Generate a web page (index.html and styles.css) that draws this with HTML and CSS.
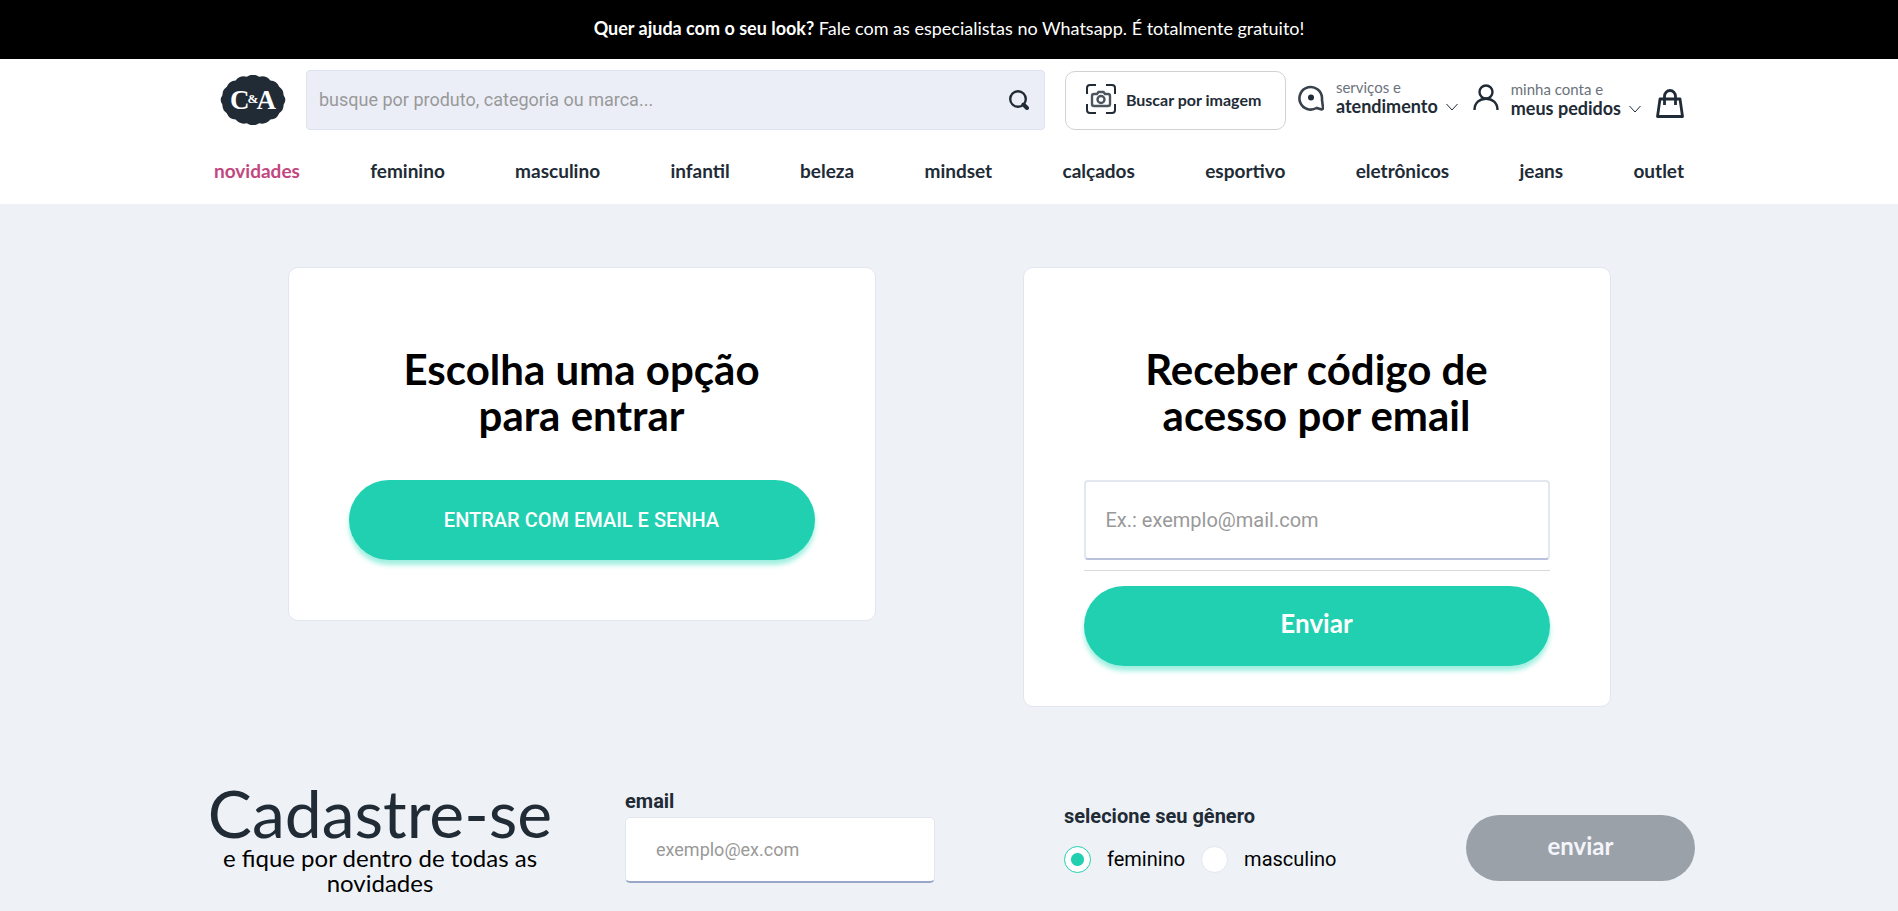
FILE: index.html
```html
<!DOCTYPE html>
<html lang="pt-BR">

<head>
    <meta charset="UTF-8">
    <meta name="viewport" content="width=device-width, initial-scale=1.0">
    <title>C&amp;A - Entrar</title>

    <link rel="stylesheet" href="styles.css">
</head>

<body>
    <div class="topbar">
        <p><strong>Quer ajuda com o seu look?</strong> Fale com as especialistas no Whatsapp. É totalmente gratuito!</p>
    </div>

    <header class="header">
        <div class="header-main">
            <a href="#" class="logo" aria-label="C&amp;A">
                <svg width="66" height="50" viewBox="0 0 66 50">
                    <path fill="#212b36" d="M63.6 29.7A10 10 0 0 1 59.2 38.2A10 10 0 0 1 50.4 44.6A11 11 0 0 1 39.2 48.2A11 11 0 0 1 26.8 48.2A11 11 0 0 1 15.6 44.6A10 10 0 0 1 6.8 38.2A10 10 0 0 1 2.4 29.7A8 8 0 0 1 2.4 20.3A10 10 0 0 1 6.8 11.8A10 10 0 0 1 15.6 5.4A11 11 0 0 1 26.8 1.8A11 11 0 0 1 39.2 1.8A11 11 0 0 1 50.4 5.4A10 10 0 0 1 59.2 11.8A10 10 0 0 1 63.6 20.3A8 8 0 0 1 63.6 29.7Z"/>
                    <text class="logo-text" x="33" y="34" text-anchor="middle">C<tspan class="logo-amp" dx="-2" dy="-6">&amp;</tspan><tspan dx="-2" dy="6">A</tspan></text>
                </svg>
            </a>

            <form class="search">
                <input type="text" class="search-input" placeholder="busque por produto, categoria ou marca..." aria-label="busque por produto, categoria ou marca">
                <button type="submit" class="search-btn" aria-label="buscar">
                    <svg width="20" height="20" viewBox="0 0 20 20" fill="none" stroke="#212b36">
                        <circle cx="9" cy="9" r="7.8" stroke-width="2.4"/>
                        <path d="M14.5 14.5L18 18" stroke-width="4" stroke-linecap="round"/>
                    </svg>
                </button>
            </form>

            <button type="button" class="image-search">
                <svg width="30" height="30" viewBox="0 0 30 30" fill="none" stroke="#212b36" stroke-width="2">
                    <path d="M1 10V4a3 3 0 0 1 3-3h6M20 1h6a3 3 0 0 1 3 3v6M29 20v6a3 3 0 0 1-3 3h-6M10 29H4a3 3 0 0 1-3-3v-6"/>
                    <g stroke="#4d555e" stroke-width="2.4">
                        <path d="M8 10h3l1.5-2h5l1.5 2h3a2 2 0 0 1 2 2v8a2 2 0 0 1-2 2H8a2 2 0 0 1-2-2v-8a2 2 0 0 1 2-2z"/>
                        <circle cx="15" cy="15.5" r="3.5"/>
                    </g>
                </svg>
                Buscar por imagem
            </button>

            <a href="#" class="account">
                <svg width="26" height="27" viewBox="0 0 26 27" fill="none" stroke="#39424c" stroke-width="2.6">
                    <path d="M24 13.5V16L25 23.5a1.5 1.5 0 0 1-2 1.8l-4.5-1.3a11.3 11.3 0 1 1 5.5-10.500z"/>
                    <circle cx="13" cy="13.5" r="3" fill="#212b36" stroke="none"/>
                </svg>
                <span class="account-text">
                    <small>serviços e</small>
                    <b>atendimento</b>
                </span>
                <svg class="arrow" width="12" height="8" viewBox="0 0 12 8" fill="none" stroke="#212b36"><path d="M.5 1L6 7l5.500-6"/></svg>
            </a>

            <a href="#" class="account account-low">
                <svg class="user-icon" width="26" height="27" viewBox="0 0 26 27" fill="none" stroke="#212b36" stroke-width="2.4">
                    <circle cx="13" cy="8" r="6.5"/>
                    <path d="M1.5 26c0-7 5-11.3 11.5-11.3S24.5 19 24.5 26"/>
                </svg>
                <span class="account-text">
                    <small>minha conta e</small>
                    <b>meus pedidos</b>
                </span>
                <svg class="arrow" width="12" height="8" viewBox="0 0 12 8" fill="none" stroke="#212b36"><path d="M.5 1L6 7l5.500-6"/></svg>
            </a>

            <a href="#" class="bag" aria-label="sacola">
                <svg width="28" height="29" viewBox="0 0 28 29" fill="none" stroke="#212b36" stroke-width="2.8" stroke-linejoin="round">
                    <path d="M4 10h20l2.5 17.5h-25z"/>
                    <path d="M8.5 16V7.5a5.5 6 0 0 1 11 0V16"/>
                </svg>
            </a>
        </div>

        <nav class="menu">
            <a href="#" class="active">novidades</a>
            <a href="#">feminino</a>
            <a href="#">masculino</a>
            <a href="#">infantil</a>
            <a href="#">beleza</a>
            <a href="#">mindset</a>
            <a href="#">calçados</a>
            <a href="#">esportivo</a>
            <a href="#">eletrônicos</a>
            <a href="#">jeans</a>
            <a href="#">outlet</a>
        </nav>
    </header>

    <main class="login">
        <section class="card">
            <h2>Escolha uma opção<br>para entrar</h2>
            <button type="button" class="btn btn-senha">Entrar com email e senha</button>
        </section>

        <form class="card card-code">
            <h2>Receber código de<br>acesso por email</h2>
            <input type="email" class="code-email" placeholder="Ex.: exemplo@mail.com" aria-label="email">
            <hr>
            <button type="submit" class="btn">Enviar</button>
        </form>
    </main>

    <form class="newsletter">
        <div class="newsletter-title">
            <h3>Cadastre-se</h3>
            <p>e fique por dentro de todas as novidades</p>
        </div>

        <div class="newsletter-email">
            <label for="newsEmail">email</label>
            <input type="email" id="newsEmail" placeholder="exemplo@ex.com">
        </div>

        <fieldset class="gender">
            <legend>selecione seu gênero</legend>
            <div class="gender-options">
                <input type="radio" name="gender" id="feminino" checked>
                <label for="feminino">feminino</label>
                <input type="radio" name="gender" id="masculino">
                <label for="masculino">masculino</label>
            </div>
        </fieldset>

        <button type="submit" class="newsletter-btn">enviar</button>
    </form>
</body>

</html>
```
FILE: styles.css
```css
* {
    box-sizing: border-box;
}

body {
    margin: 0;
    min-height: 100vh;
    background-color: #eef2f7;
    color: #212b36;
    font-family: Lato, "Open Sans", sans-serif;
}

a {
    color: inherit;
    text-decoration: none;
}

button,
input {
    font-family: inherit;
}

button {
    cursor: pointer;
}

h2,
h3,
p {
    margin: 0;
}

svg {
    display: block;
    flex-shrink: 0;
}

/* topo */
.topbar {
    padding: 15px 16px 17px;
    background-color: #000;
    color: #fff;
    font-size: 18px;
    line-height: 27px;
    text-align: center;
}

.header {
    padding: 11px 16px 22px;
    background-color: #fff;
}

.header-main,
.menu,
.login {
    max-width: 1470px;
    margin: 0 auto;
}

.header-main {
    display: flex;
    align-items: center;
}

.logo {
    margin: 0 20px 0 6px;
}

.logo-text {
    fill: #fff;
    font: bold 27px "Liberation Serif", serif;
}

.logo-amp {
    font-size: 13px;
}

.search {
    display: flex;
    flex: 1;
    height: 60px;
    margin-right: 20px;
    border: 1px solid #dfe2ef;
    border-radius: 4px;
    background-color: #ebeef7;
}

.search-input {
    flex: 1;
    padding: 0 12px 2px;
    border: 0;
    outline: 0;
    background: none;
    font-family: Roboto, sans-serif;
    font-size: 18px;
}

::placeholder {
    color: #999;
    opacity: 1;
}

.search-btn {
    padding: 0 15px;
    border: 0;
    background: none;
}

.image-search {
    display: flex;
    align-items: center;
    gap: 10px;
    width: 221px;
    height: 59px;
    margin-right: 12px;
    padding: 0 20px 2px;
    border: 1px solid #d0d2d4;
    border-radius: 10px;
    background-color: #fff;
    color: #212b36;
    font-size: 16px;
    font-weight: bold;
    white-space: nowrap;
}

.account {
    display: flex;
    align-items: center;
    margin-right: 15px;
    padding-bottom: 6px;
}

.account-low {
    padding-bottom: 2px;
}

.account-text {
    margin: 0 8px 0 12px;
    line-height: 19px;
}

.account-text small,
.account-text b {
    display: block;
}

.account-text small {
    color: #6b727b;
    font-size: 15px;
}

.account-text b {
    font-size: 18px;
}

.user-icon {
    margin-bottom: 4px;
}

.arrow {
    margin-top: 20px;
}

.bag {
    padding-top: 6px;
}

.menu {
    display: flex;
    justify-content: space-between;
    margin-top: 29px;
    font-size: 19px;
    font-weight: bold;
    line-height: 23px;
}

.menu .active {
    color: #c2477f;
}

/* login */
.login {
    display: flex;
    align-items: flex-start;
    justify-content: space-around;
    padding-top: 63px;
}

.card {
    width: 40%;
    padding: 78px 60px 60px;
    border: 1px solid #e0e5f0;
    border-radius: 10px;
    background-color: #fff;
}

.card-code {
    padding-bottom: 40px;
}

.card h2 {
    margin-bottom: 42px;
    color: #000;
    font-size: 42px;
    font-weight: bold;
    line-height: 46px;
    text-align: center;
}

.btn {
    display: block;
    width: 100%;
    height: 80px;
    padding-bottom: 8px;
    border: 0;
    border-radius: 40px;
    background-color: #20d0b0;
    box-shadow: 0 5px 5px #a0f0e0;
    color: #fff;
    font-size: 26px;
    font-weight: bold;
}

.btn-senha {
    padding-bottom: 2px;
    font-family: Roboto, sans-serif;
    font-size: 20px;
    font-weight: 500;
    text-transform: uppercase;
}

.code-email {
    display: block;
    width: 100%;
    height: 80px;
    padding: 0 20px;
    border: 2px solid #e2e7f0;
    border-bottom-color: #b8c2dc;
    border-radius: 4px;
    font-family: Roboto, sans-serif;
    font-size: 20px;
}

.card hr {
    margin: 10px 0 15px;
    border: 0;
    border-top: 1px solid #d9d9d9;
}

/* newsletter */
.newsletter {
    display: grid;
    grid-template-columns: 422fr 439fr 402fr 229fr;
    align-items: center;
    max-width: 1492px;
    margin: 0 auto;
    padding-top: 74px;
}

.newsletter-title {
    width: 354px;
    text-align: center;
}

.newsletter-title h3 {
    font-size: 66px;
    font-weight: 400;
    line-height: 64px;
}

.newsletter-title p {
    color: #000;
    font-size: 24px;
    line-height: 25px;
}

.newsletter-email {
    padding-bottom: 8px;
}

.newsletter-email label {
    display: block;
    font-family: Roboto, sans-serif;
    font-size: 20px;
    font-weight: bold;
    line-height: 32px;
}

.newsletter-email input {
    width: 310px;
    height: 66px;
    padding: 0 30px;
    border: 1px solid #e2e6ef;
    border-bottom: 2px solid #98a6c8;
    border-radius: 5px;
    font-family: Roboto, sans-serif;
    font-size: 18px;
}

.gender {
    margin: 0;
    padding: 10px 0 0;
    border: 0;
}

.gender legend {
    padding: 0;
    font-family: Roboto, sans-serif;
    font-size: 20px;
    font-weight: bold;
    line-height: 24px;
}

.gender-options {
    display: flex;
    align-items: center;
    margin-top: 8px;
    color: #000;
    font-family: Roboto, sans-serif;
    font-size: 20px;
}

.gender-options input {
    appearance: none;
    width: 27px;
    height: 27px;
    margin: 0 16px 0 0;
    border: 1px solid #e2e6ef;
    border-radius: 50%;
    background-color: #fff;
}

.gender-options input:checked {
    border-color: #20d0b0;
    background-image: radial-gradient(circle, #20d0b0 6px, #fff 7px);
}

.gender-options label {
    margin-right: 16px;
}

.newsletter-btn {
    height: 66px;
    margin-top: 20px;
    padding-bottom: 6px;
    border: 0;
    border-radius: 33px;
    background-color: #9ba1a9;
    color: #f4f5fa;
    font-size: 24px;
    font-weight: bold;
}
```
